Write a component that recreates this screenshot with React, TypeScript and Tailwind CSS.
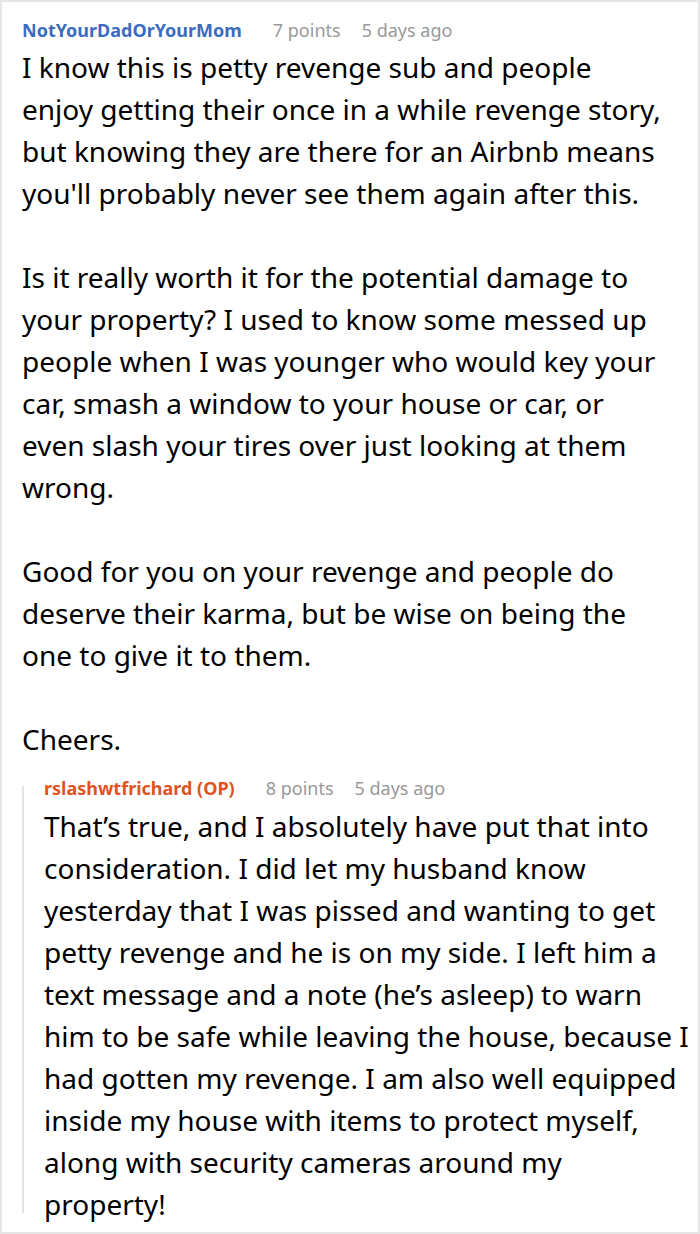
import React from "react";

// lines broken where the original comment wraps
const main = [
  [
    "I know this is petty revenge sub and people",
    "enjoy getting their once in a while revenge story,",
    "but knowing they are there for an Airbnb means",
    "you'll probably never see them again after this.",
  ],
  [
    "Is it really worth it for the potential damage to",
    "your property? I used to know some messed up",
    "people when I was younger who would key your",
    "car, smash a window to your house or car, or",
    "even slash your tires over just looking at them",
    "wrong.",
  ],
  [
    "Good for you on your revenge and people do",
    "deserve their karma, but be wise on being the",
    "one to give it to them.",
  ],
];

const reply =
  "That\u2019s true, and I absolutely have put that into consideration. I did let my husband know yesterday that I was pissed and wanting to get petty revenge and he is on my side. I left him a text message and a note (he\u2019s asleep) to warn him to be safe while leaving the house, because I had gotten my revenge. I am also well equipped inside my house with items to protect myself, along with security cameras around my property!";

function Meta({ name, points, color }: { name: string; points: string; color: string }) {
  return (
    <div className="flex items-baseline text-[18px] leading-[30px]">
      <span className={`font-bold ${color}`}>{name}</span>
      <span className="ml-[31px] text-[#999]">{points}</span>
      <span className="ml-[21px] text-[#999]">5 days ago</span>
    </div>
  );
}

export default function App() {
  return (
    <div
      className="w-[700px] h-[1234px] bg-white border-2 border-[#e6e6e6] pl-[20px] pr-[4px] pt-[13px] text-black"
      style={{ fontFamily: '"Noto Sans", "Open Sans", sans-serif' }}
    >
      <Meta name="NotYourDadOrYourMom" points="7 points" color="text-[#3b6cbf]" />
      <div className="mt-[1px] text-[28px] leading-[42px]">
        {main.map((p, i) => (
          <p key={i} className="mb-[42px] whitespace-nowrap">
            {p.map((l, j) => (
              <React.Fragment key={j}>
                {l}
                {j < p.length - 1 && <br />}
              </React.Fragment>
            ))}
          </p>
        ))}
        <p className="mt-[42px]">Cheers.</p>
      </div>
      <div className="relative mt-[13px] pl-[22px]">
        <div className="absolute left-0 top-[13px] bottom-[12px] w-[2px] bg-[#e3e3e3]" />
        <Meta name="rslashwtfrichard (OP)" points="8 points" color="text-[#e0531f]" />
        <p className="mt-[2px] pr-[4px] text-[28px] leading-[42px]">{reply}</p>
      </div>
    </div>
  );
}
